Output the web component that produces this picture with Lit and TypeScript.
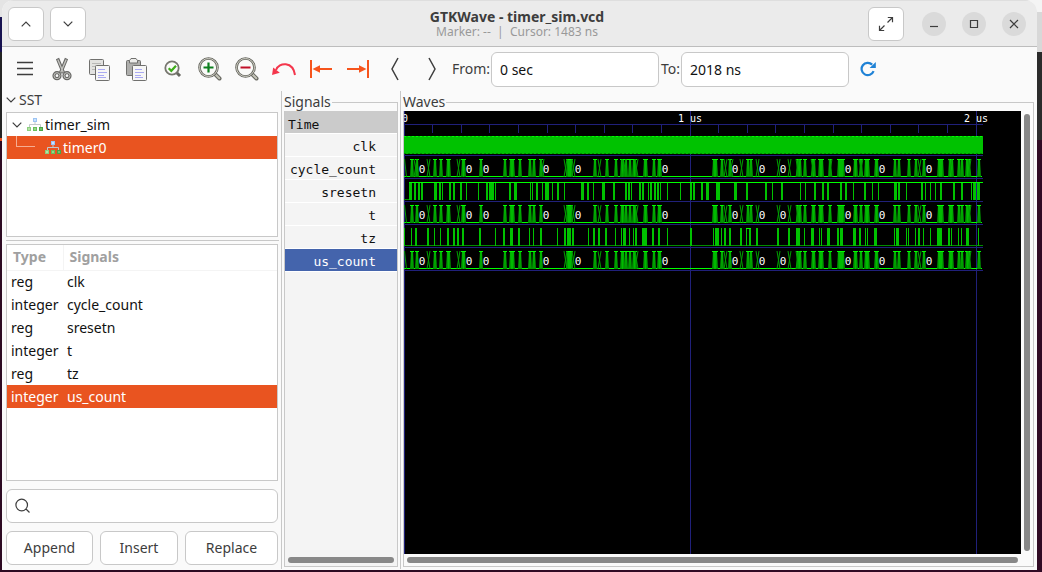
import { LitElement, html, css, svg } from "lit";
import { customElement, state } from "lit/decorators.js";

type Span = [number, number];

// Spans are in canvas pixels, one unit = 3.5 ns at the current zoom.
const ORIGIN = 404;
const END = 983;

const BUS_TRANSITIONS: Span[] = [
  [410, 414], [415, 419], [433, 437], [439, 443], [446, 451], [461, 466], [479, 483],
  [503, 507], [509, 515], [518, 522], [528, 532], [532, 536], [539, 543], [566, 573],
  [593, 597], [605, 609], [614, 618], [620, 625], [624, 628], [628, 632], [632, 637],
  [643, 648], [652, 656], [657, 662], [712, 718], [720, 724], [728, 732], [746, 750],
  [749, 753], [796, 802], [803, 807], [811, 816], [818, 824], [828, 832], [837, 845],
  [853, 858], [859, 863], [864, 870], [874, 879], [893, 897], [897, 901], [907, 911],
  [914, 918], [922, 926], [937, 944], [948, 954], [957, 961], [960, 964], [965, 971],
  [977, 981],
];

const BUS_CROSSES: Span[] = [
  [427, 430], [457, 460], [564, 567], [572, 575], [598, 601], [635, 638], [724, 727],
  [740, 743], [756, 759], [777, 780], [788, 791], [796, 799], [918, 921], [968, 971],
];

const COUNT_EXTRA_CROSSES: Span[] = [
  [414, 417], [541, 544], [622, 626], [729, 733], [811, 815], [829, 832], [859, 863], [949, 952],
];

const BUS_ZEROS = [422, 469, 486, 546, 578, 665, 735, 762, 783, 848, 882, 929];

const RESET_LOW: Span[] = [
  [409, 412], [414, 416], [418, 420], [421, 423], [434, 437], [439, 441], [442, 443],
  [449, 451], [453, 455], [460, 462], [466, 467], [478, 479], [486, 488], [489, 494],
  [495, 496], [509, 511], [514, 517], [530, 531], [532, 533], [536, 538], [542, 543],
  [545, 549], [552, 553], [557, 559], [564, 565], [581, 584], [587, 589], [593, 594],
  [602, 605], [613, 615], [625, 627], [628, 630], [631, 632], [639, 641], [642, 644],
  [648, 649], [650, 652], [654, 656], [657, 659], [660, 661], [667, 668], [680, 681],
  [690, 692], [693, 695], [701, 703], [706, 709], [716, 720], [734, 737], [746, 748],
  [765, 767], [772, 773], [781, 783], [800, 801], [805, 806], [814, 816], [822, 824],
  [827, 829], [840, 842], [845, 847], [853, 854], [864, 866], [872, 873], [878, 879],
  [894, 897], [898, 900], [906, 907], [921, 923], [925, 926], [930, 931], [935, 936],
  [940, 942], [953, 955], [961, 963], [971, 972], [973, 976], [977, 980],
];

const TZ_HIGH: Span[] = [
  [404, 405], [411, 412], [415, 417], [427, 429], [434, 435], [440, 441], [447, 449],
  [453, 455], [457, 459], [462, 464], [479, 481], [495, 496], [503, 505], [510, 513],
  [518, 520], [529, 530], [533, 534], [540, 542], [557, 558], [564, 566], [567, 571],
  [572, 574], [588, 589], [593, 595], [598, 600], [605, 607], [615, 616], [621, 622],
  [623, 626], [629, 630], [633, 634], [635, 637], [642, 647], [652, 654], [658, 660],
  [667, 668], [690, 692], [713, 714], [715, 719], [721, 722], [724, 726], [729, 731],
  [740, 742], [746, 747], [749, 751], [756, 758], [777, 779], [788, 790], [796, 800],
  [804, 805], [811, 814], [819, 820], [821, 822], [827, 830], [837, 839], [840, 843],
  [853, 856], [859, 861], [865, 866], [867, 868], [874, 877], [894, 895], [896, 899],
  [906, 907], [908, 909], [915, 916], [918, 920], [923, 924], [930, 931], [937, 942],
  [948, 950], [951, 952], [958, 959], [961, 962], [966, 969], [978, 979],
];

@customElement("wave-canvas")
export class WaveCanvas extends LitElement {
  static styles = css`
    :host { display: block; min-width: 0; background: #000; }
    .canvas { display: block; width: 100%; height: 100%; overflow: hidden; }
    .rule { fill: #20207a; shape-rendering: crispEdges; }
    .fill { fill: #00c200; shape-rendering: crispEdges; }
    .bright { fill: #00ff00; shape-rendering: crispEdges; }
    .low { fill: #008c00; shape-rendering: crispEdges; }
    .dash-top { stroke: #00ff00; stroke-dasharray: 2 2; }
    .dash-bottom { stroke: #008c00; stroke-dasharray: 2 2; }
    .slope { fill: #009400; }
    .core { fill: #00ba00; }
    .cross { stroke: #00a000; fill: none; }
    .value, .time {
      font: 10px "DejaVu Sans Mono", monospace;
      fill: #fff;
      text-anchor: middle;
    }
    .value { font-size: 11px; }
  `;

  private bar(cls: string, x0: number, x1: number, y: number, h: number) {
    return svg`<rect class=${cls} x=${x0 - ORIGIN} y=${y} width=${x1 - x0} height=${h}></rect>`;
  }

  private bus(top: number, crosses: Span[]) {
    const bottom = top + 18;
    return svg`
      ${this.bar("bright", ORIGIN, 982, bottom - 1, 1)}
      <path class="cross" d="M0.5 ${top} L2.5 ${bottom}"></path>
      ${BUS_TRANSITIONS.map(([s, e]) => {
        const a = s - ORIGIN;
        const b = e - ORIGIN;
        return svg`
          <path class="slope" d="M${a + 1} ${top}H${b - 1}L${b} ${bottom}H${a}Z"></path>
          <path class="core" d="M${a + 1} ${top}H${b - 1}L${b - 2} ${bottom}H${a + 2}Z"></path>
          ${this.bar("bright", s, e, top, 1)}`;
      })}
      ${crosses.map(([s, e]) => {
        const a = s - ORIGIN;
        const b = e - ORIGIN;
        return svg`<path class="cross" d="M${a} ${top}L${b} ${bottom}M${b} ${top}L${a} ${bottom}"></path>`;
      })}
      ${BUS_ZEROS.map((x) => svg`<text class="value" x=${x - ORIGIN} y=${top + 14}>0</text>`)}
    `;
  }

  render() {
    const ticks = Array.from({ length: 20 }, (_, i) => Math.floor(i * 28.6));
    return html`
      <svg class="canvas" role="img" aria-label="Waveforms">
        ${[0, 286, 572].map((x) => svg`<rect class="rule" x=${x} y="0" width="1" height="100%"></rect>`)}
        ${this.bar("rule", ORIGIN, END, 13, 1)}
        ${ticks.map((x) => svg`<rect class="rule" x=${x} y="13" width="1" height="9"></rect>`)}
        ${[44, 67, 90, 113, 136, 159].map((y) => this.bar("rule", ORIGIN, END, y, 1))}
        <text class="time" x="1" y="11">0</text>
        <text class="time" x="286" y="11">1 us</text>
        <text class="time" x="572" y="11">2 us</text>

        ${this.bar("fill", ORIGIN, END, 25, 18)}
        <path class="dash-top" d="M0 25.5H579"></path>
        <path class="dash-bottom" d="M0 42.5H579"></path>

        ${this.bus(48, [...BUS_CROSSES, ...COUNT_EXTRA_CROSSES])}

        ${this.bar("low", ORIGIN, 409, 88, 1)}
        ${this.bar("bright", 409, END, 71, 1)}
        ${RESET_LOW.map(([a, b]) => this.bar("fill", a, b, 72, 17))}

        ${this.bus(94, BUS_CROSSES)}

        ${this.bar("low", ORIGIN, END, 134, 1)}
        ${TZ_HIGH.map(([a, b]) => this.bar("fill", a, b, 117, 18))}
        ${this.bar("bright", 746, 751, 117, 1)}

        ${this.bus(140, BUS_CROSSES)}
      </svg>
    `;
  }
}

const line = (d: string, size = 16) => html`
  <svg class="glyph" width=${size} height=${size} viewBox="0 0 ${size} ${size}" aria-hidden="true">
    <path d=${d}></path>
  </svg>`;

const chevron = html`
  <svg class="glyph" width="10" height="6" viewBox="0 0 10 6" aria-hidden="true"><path d="M0.7 0.7L5 5L9.3 0.7"></path></svg>`;

const moduleIcon = html`
  <svg width="16" height="14" viewBox="0 0 16 14" aria-hidden="true">
    <path d="M8 4V7M2.5 9V6.5H13.5V9" fill="none" stroke="#c3c8cc"></path>
    <rect x="6" y="0" width="4" height="4" fill="#9cc4f4"></rect><rect x="7" y="1" width="2" height="2" fill="#c8e2ff"></rect>
    <rect x="0" y="9" width="4" height="4" fill="#8ccf7e"></rect><rect x="1" y="10" width="2" height="2" fill="#b4e4a6"></rect>
    <rect x="6" y="9" width="4" height="4" fill="#6abf5e"></rect><rect x="7" y="10" width="2" height="2" fill="#96d68a"></rect>
    <rect x="12" y="9" width="4" height="4" fill="#4aa546"></rect><rect x="13" y="10" width="2" height="2" fill="#74c06c"></rect>
  </svg>`;

const lens = (mark: unknown) => html`
  <svg width="24" height="24" viewBox="0 0 24 24" aria-hidden="true">
    <path d="M16.5 16.5L21.5 21.5" stroke="#66665f" stroke-width="4" stroke-linecap="round"></path>
    <path d="M17 17L21.3 21.3" stroke="#c4c4b8" stroke-width="2" stroke-linecap="round"></path>
    <circle cx="10.5" cy="10.5" r="9" fill="#fafaf8" stroke="#66665f" stroke-width="2.6"></circle>
    <circle cx="10.5" cy="10.5" r="9" fill="none" stroke="#d0d0c6" stroke-width="1"></circle>
    ${mark}
  </svg>`;

const page = svg`
  <rect x="7.5" y="8.5" width="14" height="15" rx="1" fill="#f6f6f6" stroke="#70706e"></rect>
  <path d="M10 12.5H17M10 15.5H19M10 18.5H16M10 20.5H18" stroke="#a9a9f2"></path>`;

const TOOLS = [
  { label: "Menu", icon: html`<svg class="glyph thick" width="18" height="16" viewBox="0 0 18 16" aria-hidden="true"><path d="M1 1.5H17M1 7.5H17M1 13.5H17"></path></svg>` },
  {
    label: "Cut",
    icon: html`<svg width="20" height="24" viewBox="0 0 20 24" aria-hidden="true">
      <path d="M5.5 1.5L11.5 16M14.5 1.5L8.5 16" stroke="#686866" stroke-width="3.4"></path>
      <path d="M5.8 2.5L11.3 15.5M14.2 2.5L8.7 15.5" stroke="#c2c2be" stroke-width="1.4"></path>
      <g fill="none" stroke="#686866" stroke-width="3.2"><circle cx="5" cy="18.7" r="3"></circle><circle cx="15" cy="18.7" r="3"></circle></g>
      <g fill="none" stroke="#c2c2be"><circle cx="5" cy="18.7" r="3"></circle><circle cx="15" cy="18.7" r="3"></circle></g>
    </svg>`,
  },
  {
    label: "Copy",
    icon: html`<svg width="22" height="24" viewBox="0 0 22 24" aria-hidden="true">
      <rect x="1.5" y="2.5" width="14" height="15" rx="1" fill="#e2e2e0" stroke="#70706e"></rect>
      <path d="M4 6.5H13M4 9.5H13M4 12.5H8" stroke="#b8b8b6"></path>${page}</svg>`,
  },
  {
    label: "Paste",
    icon: html`<svg width="22" height="24" viewBox="0 0 22 24" aria-hidden="true">
      <rect x="1.5" y="3.5" width="14" height="15" rx="1" fill="#aeaeac" stroke="#70706e"></rect>
      <path d="M4.5 6V3.5L6 1.5H11L12.5 3.5V6Z" fill="#ececea" stroke="#70706e"></path>${page}</svg>`,
  },
  {
    label: "Zoom fit",
    icon: html`<svg width="18" height="18" viewBox="0 0 18 18" aria-hidden="true">
      <path d="M12.5 12.5L16 16" stroke="#66665f" stroke-width="3"></path>
      <circle cx="8" cy="8" r="6.7" fill="#fafaf8" stroke="#77776f" stroke-width="1.8"></circle>
      <path d="M4.7 8.2L7.3 10.8L12 5.8" fill="none" stroke="#3fae1c" stroke-width="2.2"></path></svg>`,
  },
  { label: "Zoom in", icon: lens(svg`<path d="M10.5 5.5V15.5M5.5 10.5H15.5" stroke="#0d7f1e" stroke-width="2.2"></path>`) },
  { label: "Zoom out", icon: lens(svg`<path d="M5.5 10.5H15.5" stroke="#c01028" stroke-width="2.2"></path>`) },
  {
    label: "Undo zoom",
    icon: html`<svg width="24" height="14" viewBox="0 0 24 14" aria-hidden="true">
      <path d="M4 8C7 0 21 -1 23 13" fill="none" stroke="#f4364c" stroke-width="2"></path>
      <path d="M0 13L1.2 5.5L7.8 10.8Z" fill="#f4364c"></path></svg>`,
  },
  {
    label: "Go to start",
    icon: html`<svg width="22" height="18" viewBox="0 0 22 18" aria-hidden="true">
      <path d="M1 0V18M7 9H22" stroke="#f6541c" stroke-width="2"></path><path d="M2.5 9L10 5.2V12.8Z" fill="#f6541c"></path></svg>`,
  },
  {
    label: "Go to end",
    icon: html`<svg width="22" height="18" viewBox="0 0 22 18" aria-hidden="true">
      <path d="M21 0V18M0 9H15" stroke="#f6541c" stroke-width="2"></path><path d="M19.5 9L12 5.2V12.8Z" fill="#f6541c"></path></svg>`,
  },
  { label: "Previous edge", icon: html`<svg class="glyph edge" width="8" height="24" viewBox="0 0 8 24" aria-hidden="true"><path d="M7 1L1 12L7 23"></path></svg>` },
  { label: "Next edge", icon: html`<svg class="glyph edge" width="8" height="24" viewBox="0 0 8 24" aria-hidden="true"><path d="M1 1L7 12L1 23"></path></svg>` },
];

const SIGNALS = [
  ["reg", "clk"],
  ["integer", "cycle_count"],
  ["reg", "sresetn"],
  ["integer", "t"],
  ["reg", "tz"],
  ["integer", "us_count"],
];

@customElement("app-root")
export class AppRoot extends LitElement {
  @state() private selected = "us_count";

  static styles = css`
    :host {
      display: flex;
      min-height: 100vh;
      box-sizing: border-box;
      padding: 0 5px 2px 2px;
      font: 14px/18px "Noto Sans", "Open Sans", sans-serif;
      color: #3d3d3d;
      background:
        linear-gradient(#e4e4e4 17px, #171250 17px 52px, #242424 52px 138px, #e95420 138px 141px, #2c0a22 141px) left / 50% 100% no-repeat,
        linear-gradient(#f4f4f4 12px, #d8d8d8 12px 52px, #2b2b2b 52px 140px, #300a24 140px) right / 50% 100% no-repeat;
    }
    * { box-sizing: border-box; }
    button, input { font: inherit; color: inherit; margin: 0; }
    svg { flex: none; }
    .window {
      flex: 1;
      min-width: 0;
      display: flex;
      flex-direction: column;
      background: #fafafa;
      border-radius: 12px 12px 0 0;
      overflow: hidden;
    }
    .glyph { fill: none; stroke: #3d3d3d; stroke-width: 1.2; }
    .glyph.thick { stroke-width: 1.4; }
    .glyph.edge { stroke-width: 1.5; }

    .titlebar {
      display: grid;
      grid-template-columns: 1fr auto 1fr;
      align-items: center;
      height: 47px;
      padding: 0 11px 0 6px;
      background: #ebebeb;
      border-top: 1px solid #dedede;
      border-bottom: 1px solid #bdbdbd;
    }
    .group { display: flex; align-items: center; gap: 6px; }
    .group.end { justify-content: flex-end; gap: 18px; }
    .controls { display: flex; gap: 16px; }
    .titles { text-align: center; }
    .title { margin: 0; font-size: 14px; line-height: 17px; font-weight: 700; }
    .subtitle { margin: 0; font-size: 12px; line-height: 14px; color: #999; white-space: pre; }
    .btn {
      display: flex;
      align-items: center;
      justify-content: center;
      height: 34px;
      padding: 0;
      background: #fff;
      border: 1px solid #c8c8c8;
      border-radius: 6px;
    }
    .btn.square { width: 36px; }
    .flip { display: flex; transform: rotate(180deg); }
    .round {
      display: flex;
      align-items: center;
      justify-content: center;
      width: 24px;
      height: 24px;
      padding: 0;
      border: 0;
      border-radius: 50%;
      background: #dadada;
    }

    .toolbar { display: flex; align-items: center; height: 44px; padding: 0 4px; }
    .tool {
      display: flex;
      align-items: center;
      justify-content: center;
      width: 37px;
      height: 36px;
      padding: 0;
      border: 0;
      background: none;
    }
    .from { padding-left: 2px; width: 41px; }
    .to { padding-left: 2px; width: 22px; }
    .field {
      width: 168px;
      height: 35px;
      padding: 0 8px;
      background: #fff;
      color: #111;
      border: 1px solid #c8c8c8;
      border-radius: 6px;
    }

    .body {
      flex: 1;
      display: grid;
      grid-template-columns: 277px 1px 114px 1px minmax(0, 1fr);
      column-gap: 2px;
      padding-right: 3px;
    }
    .divider { background: #c8c8c8; margin-bottom: 1px; }

    .left { display: flex; flex-direction: column; padding: 0 0 5px 4px; }
    .expander {
      display: flex;
      align-items: center;
      gap: 3px;
      height: 21px;
      padding: 0 0 3px;
      border: 0;
      background: none;
    }
    .list { background: #fff; border: 1px solid #c8c8c8; margin-right: 1px; }
    .tree { height: 125px; }
    .tree ul { list-style: none; margin: 0; padding: 0; }
    .node { display: flex; align-items: center; height: 23px; gap: 2px; color: #111; padding-left: 5px; }
    .node .glyph { margin-right: 3px; }
    .node.child { padding-left: 9px; }
    .branch { width: 19px; height: 11px; margin: 0 8px 12px 0; border: solid #f6ad92; border-width: 0 0 1px 1px; }
    .selected { background: #e95420; color: #fff; }
    .hsplit { height: 1px; margin: 3px 0 3px; background: #c8c8c8; }

    .signals { flex: 1; }
    .table { width: 100%; border-collapse: collapse; table-layout: fixed; }
    .table th {
      height: 25px;
      padding: 0 6px;
      text-align: left;
      color: #a0a0a0;
      border-bottom: 1px solid #f4f4f4;
    }
    .table th:first-child { width: 56px; border-right: 1px solid #f4f4f4; }
    .table td { height: 23px; padding: 0 4px; }
    .table tbody tr { color: #111; cursor: default; }
    .table tbody tr.selected { color: #fff; }
    .search {
      display: flex;
      align-items: center;
      height: 34px;
      margin: 8px 1px 8px 0;
      padding: 0 8px;
      background: #fff;
      border: 1px solid #c8c8c8;
      border-radius: 6px;
    }
    .query { flex: 1; min-width: 0; border: 0; outline: 0; background: none; padding: 0 6px; }
    .actions { display: grid; grid-template-columns: 87fr 78fr 93fr; gap: 7px; margin-right: 1px; }

    .frame {
      display: grid;
      min-width: 0;
      margin: 2px 0 3px;
      padding: 0;
      border: 1px solid #c8c8c8;
    }
    .frame legend { padding: 0 1px 0 0; margin-left: -1px; height: 18px; }
    .names { grid-template-rows: 1fr 12px; background: linear-gradient(#fafafa 20px, #f4f4f4 20px); }
    .rows { font: 13px/22px "DejaVu Sans Mono", monospace; color: #111; }
    .rows ul { list-style: none; margin: 0; padding: 0; }
    .head { height: 22px; padding: 3px 0 0 3px; background: #cbcbcb; }
    .name { height: 23px; border-top: 1px solid #fff; padding: 2px 21px 0 0; text-align: right; }
    .name.on { background: #4464ac; color: #fff; }
    .tail { border-top: 1px solid #fff; }
    .hbar { height: 6px; margin: 3px; border-radius: 3px; background: #888; }
    .vbar { width: 6px; margin: 3px; border-radius: 3px; background: #888; }
    .waves { grid-template: 1fr 12px / minmax(0, 1fr) 12px; }
  `;

  render() {
    return html`
      <main class="window">
        <header class="titlebar">
          <div class="group">
            <button class="btn square" aria-label="Previous"><span class="flip">${chevron}</span></button>
            <button class="btn square" aria-label="Next">${chevron}</button>
          </div>
          <div class="titles">
            <h1 class="title">GTKWave - timer_sim.vcd</h1>
            <p class="subtitle">Marker: --  |  Cursor: 1483 ns</p>
          </div>
          <div class="group end">
            <button class="btn square" aria-label="Fullscreen">
              ${line("M9.5 6.5L14.5 1.5M9.8 1.5H14.5V6.2M6.5 9.5L1.5 14.5M1.5 9.8V14.5H6.2")}
            </button>
            <div class="controls">
              <button class="round" aria-label="Minimize">${line("M4 10.5H12")}</button>
              <button class="round" aria-label="Maximize">${line("M4.5 4.5H11.5V11.5H4.5Z")}</button>
              <button class="round" aria-label="Close">${line("M4 4L12 12M12 4L4 12")}</button>
            </div>
          </div>
        </header>

        <nav class="toolbar">
          ${TOOLS.map((t) => html`<button class="tool" aria-label=${t.label}>${t.icon}</button>`)}
          <label class="from" for="from">From:</label>
          <input class="field" id="from" value="0 sec" />
          <label class="to" for="to">To:</label>
          <input class="field" id="to" value="2018 ns" />
          <button class="tool" aria-label="Reload">
            <svg width="16" height="16" viewBox="0 0 16 16" aria-hidden="true">
              <path d="M13.6 10.2A6.2 6.2 0 1 1 12.2 3.6" fill="none" stroke="#1f82d6" stroke-width="2.2"></path>
              <path d="M15.8 1V7H9.6Z" fill="#1f82d6"></path>
            </svg>
          </button>
        </nav>

        <div class="body">
          <section class="left">
            <button class="expander">${chevron} SST</button>
            <div class="list tree">
              <ul>
                <li class="node">${chevron}${moduleIcon}<span>timer_sim</span></li>
                <li class="node child selected"><span class="branch"></span>${moduleIcon}<span>timer0</span></li>
              </ul>
            </div>
            <div class="hsplit"></div>
            <div class="list signals">
              <table class="table">
                <thead><tr><th>Type</th><th>Signals</th></tr></thead>
                <tbody>
                  ${SIGNALS.map(([type, name]) => html`
                    <tr class=${name === this.selected ? "selected" : ""} @click=${() => (this.selected = name)}>
                      <td>${type}</td><td>${name}</td>
                    </tr>`)}
                </tbody>
              </table>
            </div>
            <div class="search">
              ${line("M12.5 7A5.8 5.8 0 1 1 0.9 7A5.8 5.8 0 1 1 12.5 7M11 11L14.5 14.5")}
              <input class="query" type="search" aria-label="Filter signals" />
            </div>
            <div class="actions">
              <button class="btn">Append</button>
              <button class="btn">Insert</button>
              <button class="btn">Replace</button>
            </div>
          </section>
          <div class="divider"></div>
          <fieldset class="frame names">
            <legend>Signals</legend>
            <div class="rows">
              <div class="head">Time</div>
              <ul>
                ${SIGNALS.map(([, name]) => html`<li class="name ${name === this.selected ? "on" : ""}">${name}</li>`)}
              </ul>
              <div class="tail"></div>
            </div>
            <div class="hbar"></div>
          </fieldset>
          <div class="divider"></div>
          <fieldset class="frame waves">
            <legend>Waves</legend>
            <wave-canvas></wave-canvas>
            <div class="vbar"></div>
            <div class="hbar"></div>
          </fieldset>
        </div>
      </main>
    `;
  }
}
